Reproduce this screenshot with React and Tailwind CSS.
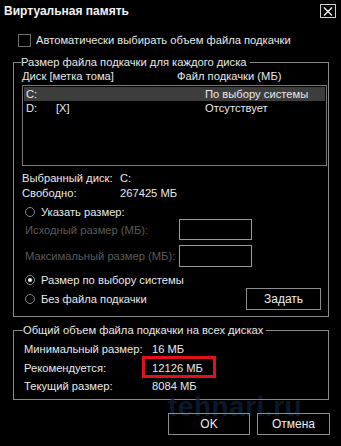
import React from "react";

const font = { fontFamily: '"Liberation Sans", Arial, sans-serif' };

function Radio({ checked }) {
    return (
        <span className="w-[10px] h-[10px] rounded-full border border-[#8a8a8a] flex items-center justify-center shrink-0">
            {checked && <span className="w-[4px] h-[4px] rounded-full bg-white" />}
        </span>
    );
}

function Btn({ children, className = "" }) {
    return (
        <div className={"border border-[#8c8c8c] flex items-center justify-center text-[#ececec] text-[12px] shrink-0 " + className}>
            {children}
        </div>
    );
}

export default function App() {
    const disks = [
        { d: "C:", label: "", size: "По выбору системы", sel: true },
        { d: "D:", label: "[X]", size: "Отсутствует", sel: false }
    ];

    return (
        <div className="w-[341px] h-[446px] bg-black text-[#e8e8e8] text-[11.2px] leading-[14px] relative overflow-hidden whitespace-nowrap" style={font}>
            {/* watermark */}
            <div className="absolute left-[168px] top-[400px] text-[28px] font-bold text-[#10223d] opacity-70 tracking-[0.5px] pointer-events-none">
                tehnari.ru
            </div>

            {/* title bar */}
            <div className="h-[22px] flex items-center justify-between pl-[4px] pr-[5px]">
                <div className="font-bold text-[12px] text-[#f2f2f2]">Виртуальная память</div>
                <div className="w-[16px] h-[14px] border border-[#d0d0d0] flex items-center justify-center">
                    <svg width="10" height="9" viewBox="0 0 10 9">
                        <path d="M1 0.5 L9 8.5 M9 0.5 L1 8.5" stroke="#f0f0f0" strokeWidth="1.4" />
                    </svg>
                </div>
            </div>

            {/* auto checkbox */}
            <div className="mt-[11px] ml-[18px] h-[14px] flex items-center gap-[5px]">
                <span className="w-[13px] h-[13px] border border-[#6e6e6e] shrink-0" />
                <span>Автоматически выбирать объем файла подкачки</span>
            </div>

            {/* per-disk group */}
            <fieldset className="ml-[13px] w-[316px] mt-[8px] border border-[#8a8a8a] pl-[8px] pr-[1px] pb-[6px]">
                <legend className="ml-[-1px] pr-[3px] leading-[14px]">Размер файла подкачки для каждого диска</legend>
                <div className="flex h-[13px] items-center">
                    <span className="w-[155px] shrink-0">Диск [метка тома]</span>
                    <span>Файл подкачки (МБ)</span>
                </div>
                <div className="mt-[3px] h-[81px] border border-[#7a7a7a] pt-[1px] px-[1px]">
                    {disks.map((r) => (
                        <div key={r.d} className={"flex h-[14px] items-center " + (r.sel ? "bg-[#3d3d3d]" : "")}>
                            <span className="w-[32px] pl-[2px] shrink-0">{r.d}</span>
                            <span className="w-[149px] shrink-0">{r.label}</span>
                            <span>{r.size}</span>
                        </div>
                    ))}
                </div>

                <div className="mt-[4px] flex h-[15px] items-center">
                    <span className="w-[98px] shrink-0">Выбранный диск:</span>
                    <span>C:</span>
                </div>
                <div className="flex h-[15px] items-center">
                    <span className="w-[98px] shrink-0">Свободно:</span>
                    <span>267425 МБ</span>
                </div>

                <div className="mt-[5px] h-[14px] flex items-center gap-[6px] pl-[3px]">
                    <Radio />
                    <span>Указать размер:</span>
                </div>
                <div className="flex items-center h-[21px]">
                    <span className="w-[157px] shrink-0 pl-[3px] text-[#5a5a5a]">Исходный размер (МБ):</span>
                    <span className="w-[73px] h-[21px] border border-[#9a9a9a] shrink-0" />
                </div>
                <div className="mt-[5px] flex items-center h-[22px]">
                    <span className="w-[157px] shrink-0 pl-[3px] text-[#5a5a5a]">Максимальный размер (МБ):</span>
                    <span className="w-[73px] h-[22px] border border-[#9a9a9a] shrink-0" />
                </div>

                <div className="mt-[6px] h-[14px] flex items-center gap-[6px] pl-[3px]">
                    <Radio checked />
                    <span>Размер по выбору системы</span>
                </div>
                <div className="mt-[1px] flex items-center justify-between pr-[6px]">
                    <div className="flex items-center gap-[6px] pl-[3px]">
                        <Radio />
                        <span>Без файла подкачки</span>
                    </div>
                    <Btn className="w-[75px] h-[22px]">Задать</Btn>
                </div>
            </fieldset>

            {/* totals group */}
            <fieldset className="ml-[13px] w-[316px] mt-[6px] border border-[#8a8a8a] pl-[10px] pb-[4px]">
                <legend className="ml-[-1px] pr-[3px] leading-[14px]">Общий объем файла подкачки на всех дисках</legend>
                <div className="mt-[3px] flex h-[18px] items-center">
                    <span className="w-[128px] shrink-0">Минимальный размер:</span>
                    <span>16 МБ</span>
                </div>
                <div className="flex h-[19px] items-center">
                    <span className="w-[128px] shrink-0">Рекомендуется:</span>
                    <span className="relative">
                        12126 МБ
                        <span className="absolute left-[-10px] right-[-13px] top-[-5px] bottom-[-3px] border-[3px] border-[#e2101c]" />
                    </span>
                </div>
                <div className="flex h-[18px] items-center">
                    <span className="w-[128px] shrink-0">Текущий размер:</span>
                    <span>8084 МБ</span>
                </div>
            </fieldset>

            {/* bottom buttons */}
            <div className="relative mt-[13px] flex justify-end gap-[7px] pr-[11px]">
                <Btn className="w-[82px] h-[22px]">OK</Btn>
                <Btn className="w-[73px] h-[22px]">Отмена</Btn>
            </div>
        </div>
    );
}
